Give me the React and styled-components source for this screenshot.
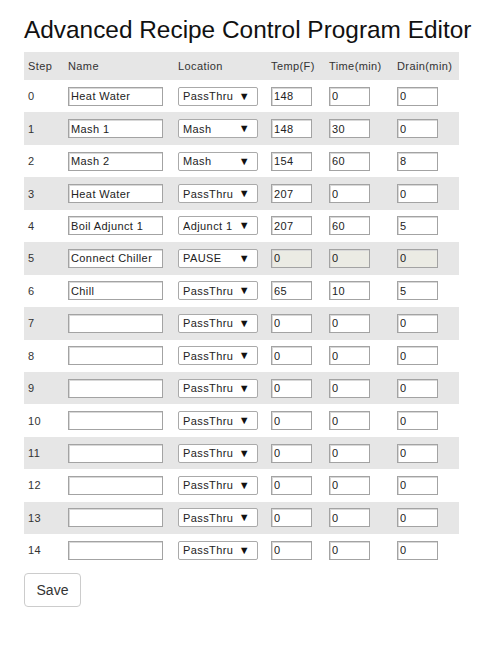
import React, { useState } from 'react';
import styled, { createGlobalStyle } from 'styled-components';

const GlobalStyle = createGlobalStyle`
  body {
    margin: 0;
    background: #fff;
    font-family: 'Liberation Sans', Arial, sans-serif;
    color: #222;
  }
`;

const Page = styled.div`
  padding: 16px 24px 0 24px;
`;

const Title = styled.h1`
  margin: 0 0 9px 0;
  font-size: 24.4px;
  font-weight: normal;
  line-height: 27px;
  color: #111;
  white-space: nowrap;
`;

const Table = styled.table`
  border-collapse: collapse;
  table-layout: fixed;
  width: 435px;
  font-size: 11px;
  letter-spacing: 0.4px;
`;

const HeadRow = styled.tr`
  background: #e6e6e6;
  height: 28px;
`;

const Th = styled.th`
  box-sizing: border-box;
  text-align: left;
  font-weight: normal;
  padding: 0 0 0 4px;
  color: #333;
  white-space: nowrap;
`;

const Row = styled.tr`
  height: 32.45px;
  background: ${p => (p.$odd ? '#e6e6e6' : '#fff')};
`;

const Td = styled.td`
  padding: 0 0 0 4px;
  vertical-align: middle;
  color: #333;
`;

const TextBox = styled.input`
  box-sizing: border-box;
  width: ${p => p.$w}px;
  height: 19px;
  margin: 0;
  padding: 0 2px;
  border: 1px solid #a3a3a3;
  box-shadow: inset 1px 1px 0 #d8d8d8;
  font-family: 'Liberation Sans', Arial, sans-serif;
  font-size: 11px;
  letter-spacing: 0.4px;
  color: #222;
  background: ${p => (p.disabled ? '#ebebe4' : '#fff')};
  display: block;
`;

const SelectWrap = styled.div`
  position: relative;
  width: 80px;
  height: 19px;
`;

const Select = styled.select`
  appearance: none;
  box-sizing: border-box;
  width: 80px;
  height: 19px;
  margin: 0;
  padding: 0 0 0 4px;
  border: 1px solid #aaa;
  border-radius: 2px;
  background: #fff;
  font-family: 'Liberation Sans', Arial, sans-serif;
  font-size: 11px;
  letter-spacing: 0.4px;
  color: #222;
  display: block;
`;

const Arrow = styled.span`
  position: absolute;
  right: 8px;
  top: 2px;
  font-size: 11px;
  line-height: 14px;
  color: #111;
  pointer-events: none;
`;

const SaveButton = styled.button`
  margin-top: 6px;
  width: 57px;
  height: 34px;
  border: 1px solid #ccc;
  border-radius: 4px;
  background: #fff;
  font-family: 'Liberation Sans', Arial, sans-serif;
  font-size: 14px;
  color: #333;
`;

const LOCATIONS = ['PassThru', 'Mash', 'Adjunct 1', 'Adjunct 2', 'PAUSE'];

const initial = [
  { name: 'Heat Water', loc: 'PassThru', temp: '148', time: '0', drain: '0' },
  { name: 'Mash 1', loc: 'Mash', temp: '148', time: '30', drain: '0' },
  { name: 'Mash 2', loc: 'Mash', temp: '154', time: '60', drain: '8' },
  { name: 'Heat Water', loc: 'PassThru', temp: '207', time: '0', drain: '0' },
  { name: 'Boil Adjunct 1', loc: 'Adjunct 1', temp: '207', time: '60', drain: '5' },
  { name: 'Connect Chiller', loc: 'PAUSE', temp: '0', time: '0', drain: '0' },
  { name: 'Chill', loc: 'PassThru', temp: '65', time: '10', drain: '5' },
];
while (initial.length < 15) {
  initial.push({ name: '', loc: 'PassThru', temp: '0', time: '0', drain: '0' });
}

const App = () => {
  const [steps, setSteps] = useState(initial);

  function update(i, key, value) {
    setSteps(steps.map((s, j) => (j === i ? { ...s, [key]: value } : s)));
  }

  return (
    <Page>
      <GlobalStyle />
      <Title>Advanced Recipe Control Program Editor</Title>
      <Table>
        <colgroup>
          <col style={{ width: 40 }} />
          <col style={{ width: 110 }} />
          <col style={{ width: 93 }} />
          <col style={{ width: 58 }} />
          <col style={{ width: 68 }} />
          <col style={{ width: 66 }} />
        </colgroup>
        <thead>
          <HeadRow>
            <Th>Step</Th>
            <Th>Name</Th>
            <Th>Location</Th>
            <Th>Temp(F)</Th>
            <Th>Time(min)</Th>
            <Th>Drain(min)</Th>
          </HeadRow>
        </thead>
        <tbody>
          {steps.map((s, i) => {
            const paused = s.loc === 'PAUSE';
            return (
              <Row key={i} $odd={i % 2 === 1}>
                <Td>{i}</Td>
                <Td>
                  <TextBox $w={95} value={s.name} onChange={e => update(i, 'name', e.target.value)} />
                </Td>
                <Td>
                  <SelectWrap>
                    <Select value={s.loc} onChange={e => update(i, 'loc', e.target.value)}>
                      {LOCATIONS.map(l => <option key={l}>{l}</option>)}
                    </Select>
                    <Arrow>▼</Arrow>
                  </SelectWrap>
                </Td>
                <Td>
                  <TextBox $w={41} disabled={paused} value={s.temp} onChange={e => update(i, 'temp', e.target.value)} />
                </Td>
                <Td>
                  <TextBox $w={41} disabled={paused} value={s.time} onChange={e => update(i, 'time', e.target.value)} />
                </Td>
                <Td>
                  <TextBox $w={41} disabled={paused} value={s.drain} onChange={e => update(i, 'drain', e.target.value)} />
                </Td>
              </Row>
            );
          })}
        </tbody>
      </Table>
      <SaveButton>Save</SaveButton>
    </Page>
  );
};

export default App;
